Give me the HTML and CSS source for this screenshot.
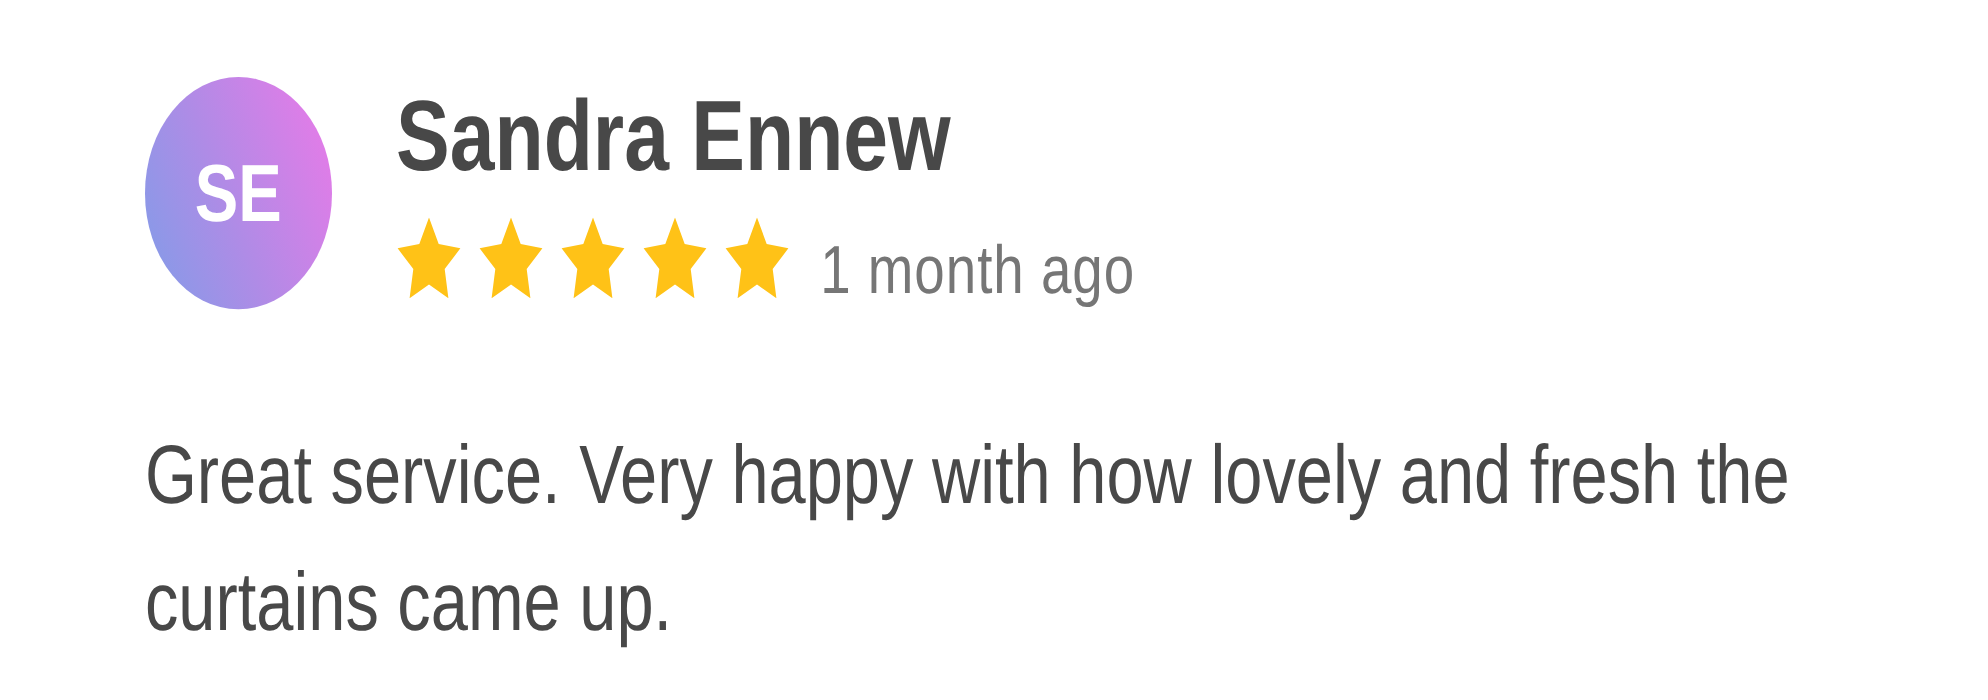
FILE: index.html
```html
<!DOCTYPE html>
<html lang="en">
<head>
<meta charset="utf-8">
<title>Review</title>
<link rel="stylesheet" href="styles.css">
</head>
<body>
<div class="stage">
  <article class="review">
    <header class="review-head">
      <div class="avatar">SE</div>
      <div class="meta">
        <h2 class="name">Sandra Ennew</h2>
        <div class="rating">
          <div class="stars">
            <svg class="star" viewBox="-1 -1 2 1.809" preserveAspectRatio="none"><polygon points="0,-1 0.294,-0.4045 0.951,-0.309 0.4755,0.1545 0.588,0.809 0,0.5 -0.588,0.809 -0.4755,0.1545 -0.951,-0.309 -0.294,-0.4045"/></svg>
            <svg class="star" viewBox="-1 -1 2 1.809" preserveAspectRatio="none"><polygon points="0,-1 0.294,-0.4045 0.951,-0.309 0.4755,0.1545 0.588,0.809 0,0.5 -0.588,0.809 -0.4755,0.1545 -0.951,-0.309 -0.294,-0.4045"/></svg>
            <svg class="star" viewBox="-1 -1 2 1.809" preserveAspectRatio="none"><polygon points="0,-1 0.294,-0.4045 0.951,-0.309 0.4755,0.1545 0.588,0.809 0,0.5 -0.588,0.809 -0.4755,0.1545 -0.951,-0.309 -0.294,-0.4045"/></svg>
            <svg class="star" viewBox="-1 -1 2 1.809" preserveAspectRatio="none"><polygon points="0,-1 0.294,-0.4045 0.951,-0.309 0.4755,0.1545 0.588,0.809 0,0.5 -0.588,0.809 -0.4755,0.1545 -0.951,-0.309 -0.294,-0.4045"/></svg>
            <svg class="star" viewBox="-1 -1 2 1.809" preserveAspectRatio="none"><polygon points="0,-1 0.294,-0.4045 0.951,-0.309 0.4755,0.1545 0.588,0.809 0,0.5 -0.588,0.809 -0.4755,0.1545 -0.951,-0.309 -0.294,-0.4045"/></svg>
          </div>
          <span class="time">1 month ago</span>
        </div>
      </div>
    </header>
    <p class="text">Great service. Very happy with how lovely and fresh the curtains came up.</p>
  </article>
</div>
</body>
</html>
```

FILE: styles.css
```css
html {
  background: #ffffff;
}

body {
  margin: 0;
  min-height: 700px;
  background: #ffffff;
}

/* The card is drawn at its on-screen width and stretched vertically. */
.stage {
  min-height: 563.5px;
  transform: scaleY(1.242236);
  transform-origin: 0 0;
}

.review {
  padding: 61.985px 0 0 144.9px;
  font-family: "Liberation Sans", Arial, sans-serif;
  color: #484848;
  text-rendering: geometricPrecision;
}

.review-head {
  display: flex;
  align-items: flex-start;
}

.avatar {
  flex: none;
  width: 186.76px;
  height: 186.76px;
  margin-right: 64.4px;
  border-radius: 50%;
  display: flex;
  align-items: center;
  justify-content: center;
  background: linear-gradient(65deg, #7f9de8 0%, #b08be6 45%, #ec79e8 100%);
  color: #ffffff;
  font-size: 65.2px;
  font-weight: 700;
  line-height: 1;
}

.meta {
  padding-top: 8.05px;
}

.name {
  margin: 0;
  font-size: 80.5px;
  font-weight: 700;
  line-height: 80.5px;
  color: #484848;
}

.rating {
  display: flex;
  align-items: flex-start;
  margin-top: 24.15px;
}

.stars {
  display: flex;
  gap: 16.1px;
}

.star {
  display: block;
  width: 66px;
  height: 65.2px;
  fill: #ffc217;
}

.time {
  margin: 15.3px 0 0 29.8px;
  font-size: 54.74px;
  line-height: 54.74px;
  letter-spacing: 0.97px;
  color: #767676;
}

.text {
  margin: 82.915px 0 0;
  max-width: 1771px;
  font-size: 66.815px;
  line-height: 102.235px;
  color: #484848;
}
```
